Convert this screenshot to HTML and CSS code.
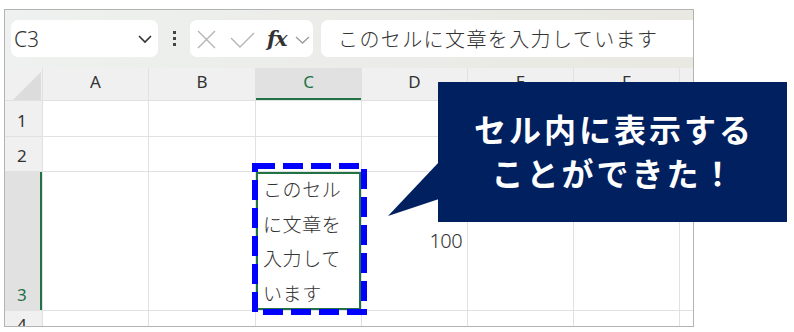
FILE: index.html
```html
<!DOCTYPE html>
<html>
<head>
  <title>セル内の文章</title>
  <link rel="stylesheet" href="styles.css">
</head>
<body>
  <div class="page">
    <div class="window">
      <div class="toolbar">
        <div class="namebox">
          <span>C3</span>
          <svg width="16" height="10" viewBox="0 0 16 10"><path d="M2 2 L8 8 L14 2" fill="none" stroke="#333" stroke-width="1.6"/></svg>
        </div>
        <div class="more"><i></i><i></i><i></i></div>
        <div class="fxbox">
          <svg class="ico-x" width="19" height="19" viewBox="0 0 19 19"><path d="M1 1 L18 18 M18 1 L1 18" stroke="#b4b4b4" stroke-width="1.4"/></svg>
          <svg class="ico-ok" width="25" height="16" viewBox="0 0 25 16"><path d="M1 6 L10 15 L24 1" fill="none" stroke="#b4b4b4" stroke-width="1.4"/></svg>
          <span class="fx">fx</span>
          <svg class="ico-dd" width="15" height="8" viewBox="0 0 15 8"><path d="M1 1 L7.5 7 L14 1" fill="none" stroke="#9a9a9a" stroke-width="1.3"/></svg>
        </div>
        <div class="formula">このセルに文章を入力しています</div>
      </div>

      <div class="sheet">
        <div class="corner"></div>
        <div class="colhead">A</div>
        <div class="colhead">B</div>
        <div class="colhead active">C</div>
        <div class="colhead">D</div>
        <div class="colhead">E</div>
        <div class="colhead">F</div>
        <div class="colhead">G</div>

        <div class="rowhead">1</div>
        <div class="cell"></div><div class="cell"></div><div class="cell"></div><div class="cell"></div>
        <div class="cell"></div><div class="cell"></div><div class="cell"></div>

        <div class="rowhead">2</div>
        <div class="cell"></div><div class="cell"></div><div class="cell"></div><div class="cell"></div>
        <div class="cell"></div><div class="cell"></div><div class="cell"></div>

        <div class="rowhead active">3</div>
        <div class="cell"></div>
        <div class="cell"></div>
        <div class="cell selected">このセル<br>に文章を<br>入力して<br>います</div>
        <div class="cell number">100</div>
        <div class="cell"></div><div class="cell"></div><div class="cell"></div>

        <div class="rowhead">4</div>
        <div class="cell"></div><div class="cell"></div><div class="cell"></div><div class="cell"></div>
        <div class="cell"></div><div class="cell"></div><div class="cell"></div>
      </div>
    </div>

    <!-- annotation layer -->
    <svg class="dashbox" width="124" height="160" viewBox="0 0 124 160">
      <rect x="7" y="7" width="109" height="146" fill="none" stroke="#0000ff" stroke-width="6" stroke-dasharray="20 8"/>
    </svg>
    <div class="callout">セル内に表示する<br>ことができた！</div>
  </div>
</body>
</html>
```

FILE: styles.css
```css
body {
  margin: 0;
  background: #fff;
  font-family: "Noto Sans", "Noto Sans CJK JP", sans-serif;
  color: #333;
}
.page {
  position: relative;
  width: 794px;
  height: 332px;
  padding: 9px 0 0 4px;
  box-sizing: border-box;
}
.window {
  width: 690px;
  height: 318px;
  border: 1px solid #b3b3b3;
  box-sizing: border-box;
  overflow: hidden;
  background: #fff;
}

/* formula bar */
.toolbar {
  height: 58px;
  box-sizing: border-box;
  padding: 10px 0 11px 6px;
  display: flex;
  align-items: center;
  background: linear-gradient(to right, #eef1ef, #e9e8e2);
}
.namebox {
  width: 147px;
  height: 37px;
  flex: none;
  box-sizing: border-box;
  background: #fff;
  border-radius: 7px;
  display: flex;
  align-items: center;
  justify-content: space-between;
  padding: 0 5px 0 3px;
  font-size: 21px;
  font-weight: 300;
}
.more {
  width: 32px;
  flex: none;
  display: flex;
  flex-direction: column;
  align-items: center;
  gap: 3px;
}
.more i {
  width: 3px;
  height: 3px;
  background: #444;
}
.fxbox {
  width: 123px;
  height: 37px;
  flex: none;
  box-sizing: border-box;
  background: #fff;
  border-radius: 7px;
  display: flex;
  align-items: center;
  padding-left: 7px;
}
.ico-x { margin-top: 1px; }
.ico-ok { margin-left: 14px; margin-top: 3px; }
.fx {
  margin-left: 12px;
  width: 22px;
  font-family: "DejaVu Serif", serif;
  font-style: italic;
  font-weight: bold;
  font-size: 21px;
  letter-spacing: -1px;
  color: #333;
}
.ico-dd { margin-left: 6px; margin-top: 2px; }
.formula {
  flex: none;
  width: 390px;
  height: 37px;
  margin-left: 8px;
  box-sizing: border-box;
  background: #fff;
  border-radius: 7px 0 0 7px;
  padding-left: 17px;
  font-family: "Noto Sans CJK JP", sans-serif;
  font-weight: 300;
  font-size: 20px;
  letter-spacing: 1.4px;
  line-height: 37px;
  white-space: nowrap;
  color: #333;
}

/* grid */
.sheet {
  display: grid;
  width: max-content;
  grid-template-columns: 38px 106px 107px 106px 106px 106px 106px 106px;
  grid-template-rows: 33px 36px 35px 139px 30px;
}
.sheet > div {
  box-sizing: border-box;
  border-right: 1px solid #e1e1e1;
  border-bottom: 1px solid #e1e1e1;
}
.corner {
  background: #f0f0f0;
  position: relative;
}
.corner::after {
  content: "";
  position: absolute;
  left: 8px;
  top: 4px;
  width: 28px;
  height: 28px;
  background: #dcdcdc;
  clip-path: polygon(100% 0, 100% 100%, 0 100%);
}
.colhead {
  background: #f0f0f0;
  display: flex;
  align-items: center;
  justify-content: center;
  padding-bottom: 6px;
  font-size: 17px;
}
.colhead.active {
  background: #e1e1e1;
  color: #1e7145;
  box-shadow: inset 0 -2px 0 #217346;
}
.rowhead {
  background: #f0f0f0;
  display: flex;
  align-items: flex-end;
  padding: 0 0 5px 12px;
  font-size: 17px;
  line-height: 20px;
}
.rowhead.active {
  background: #e1e1e1;
  color: #1e7145;
  box-shadow: inset -2px 0 0 #217346;
}
.rowhead:last-of-type {
  align-items: flex-start;
  padding-top: 8px;
}
.cell.selected {
  box-shadow: inset 0 0 0 2px #217346;
  padding: 0 0 0 7px;
  font-family: "Noto Sans CJK JP", sans-serif;
  font-weight: 300;
  font-size: 19px;
  letter-spacing: 0.6px;
  line-height: 34.5px;
}
.cell.number {
  display: flex;
  align-items: center;
  justify-content: flex-end;
  padding: 0 5px 2px 0;
  font-size: 20px;
  font-weight: 300;
  letter-spacing: -0.6px;
}

/* annotations */
.dashbox {
  position: absolute;
  left: 248px;
  top: 159px;
}
.callout {
  position: absolute;
  left: 438px;
  top: 82px;
  width: 349px;
  height: 140px;
  background: #002060;
  color: #fff;
  display: flex;
  align-items: center;
  justify-content: center;
  text-align: center;
  padding: 0 0 4px 3px;
  box-sizing: border-box;
  font-family: "Noto Sans CJK JP", sans-serif;
  font-weight: bold;
  font-size: 32px;
  letter-spacing: 3px;
  line-height: 44px;
}
.callout::before {
  content: "";
  position: absolute;
  left: -50px;
  top: 80px;
  width: 51px;
  height: 54px;
  background: #002060;
  clip-path: polygon(0 100%, 100% 0, 100% 37px);
}
```
